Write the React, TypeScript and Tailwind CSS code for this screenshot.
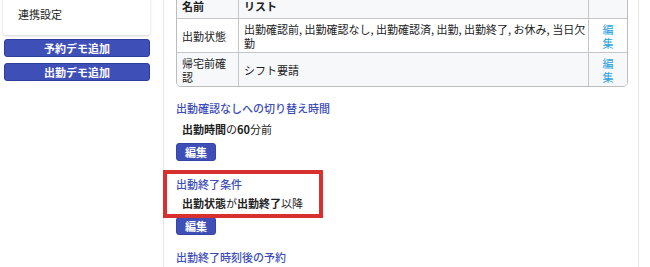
import React from "react";

const font = { fontFamily: '"Noto Sans CJK JP", "Noto Sans", sans-serif' };

function EditLink() {
  return (
    <div className="flex flex-col items-center justify-center text-[11px] leading-[14px] text-[#2aa2de]">
      <span>編</span>
      <span>集</span>
    </div>
  );
}

function BlueButton({ children }: { children: React.ReactNode }) {
  return (
    <button className="h-[18px] w-[40px] rounded-[3px] bg-[#3f4fb8] border border-[#3444a8] text-white text-[11px] font-bold leading-[16px] flex items-center justify-center">
      {children}
    </button>
  );
}

export default function App() {
  return (
    <div
      className="w-[650px] h-[267px] overflow-hidden bg-white flex text-[#222] text-[11px]"
      style={font}
    >
      {/* Sidebar */}
      <aside className="w-[163px] shrink-0 flex flex-col">
        <div className="ml-[3px] w-[147px] -mt-[10px] pt-[16px] pb-[13px] pl-[15px] bg-white rounded-[3px] shadow-[0_1px_3px_rgba(0,0,0,0.18)] leading-[16px] text-[11px]">
          連携設定
        </div>
        <button className="ml-[4px] mt-[4px] w-[146px] h-[18px] rounded-[3px] bg-[#3f4fb8] border border-[#2e3d9e] text-white text-[11px] font-bold leading-[16px]">
          予約デモ追加
        </button>
        <button className="ml-[4px] mt-[6px] w-[146px] h-[18px] rounded-[3px] bg-[#3f4fb8] border border-[#2e3d9e] text-white text-[11px] font-bold leading-[16px]">
          出勤デモ追加
        </button>
      </aside>

      {/* Main */}
      <main className="relative w-[476px] shrink-0 border-l border-r border-[#e6e6e6] pl-[12px]">
        <div className="-mt-[7px] w-[452px] border border-[#bcbcbc] rounded-b-[5px] overflow-hidden">
          {/* header */}
          <div className="grid grid-cols-[62px_350px_1fr] h-[24px] bg-[#f7f8fa]">
            <div className="border-r border-[#c6c6c6] pl-[5px] flex items-center font-bold leading-[14px]">名前</div>
            <div className="border-r border-[#c6c6c6] pl-[5px] flex items-center font-bold leading-[14px]">リスト</div>
            <div></div>
          </div>
          {/* row 1 */}
          <div className="grid grid-cols-[62px_350px_1fr] h-[34px] border-t border-[#c6c6c6] bg-white">
            <div className="border-r border-[#c6c6c6] pl-[5px] flex items-center leading-[14px]">出勤状態</div>
            <div className="border-r border-[#c6c6c6] pl-[5px] flex items-center leading-[14px]">
              <span>
                出勤確認前, 出勤確認なし, 出勤確認済, 出勤, 出勤終了, お休み, 当日欠
                <br />
                勤
              </span>
            </div>
            <EditLink />
          </div>
          {/* row 2 */}
          <div className="grid grid-cols-[62px_350px_1fr] h-[34px] border-t border-[#c6c6c6] bg-[#f7f8fa]">
            <div className="border-r border-[#c6c6c6] pl-[5px] pr-[4px] flex items-center leading-[14px]">帰宅前確認</div>
            <div className="border-r border-[#c6c6c6] pl-[5px] flex items-center leading-[14px]">シフト要請</div>
            <EditLink />
          </div>
        </div>

        <div className="mt-[14px] leading-[14px] text-[#3d4db9] font-medium">出動確認なしへの切り替え時間</div>
        <div className="mt-[7px] pl-[6px] leading-[14px]">
          <b>出勤時間</b>の<b>60</b>分前
        </div>
        <div className="mt-[7px]">
          <BlueButton>編集</BlueButton>
        </div>

        <div className="mt-[16px] leading-[14px] text-[#3d4db9] font-medium">出動終了条件</div>
        <div className="mt-[5px] pl-[6px] leading-[14px]">
          <b>出勤状態</b>が<b>出勤終了</b>以降
        </div>
        <div className="mt-[7px]">
          <BlueButton>編集</BlueButton>
        </div>

        <div className="mt-[15px] leading-[14px] text-[#3d4db9] font-medium">出勤終了時刻後の予約</div>

        {/* annotation box */}
        <div className="absolute left-[-1px] top-[170px] w-[160px] h-[48px] border-[4px] border-[#d8302e]"></div>
      </main>
    </div>
  );
}
